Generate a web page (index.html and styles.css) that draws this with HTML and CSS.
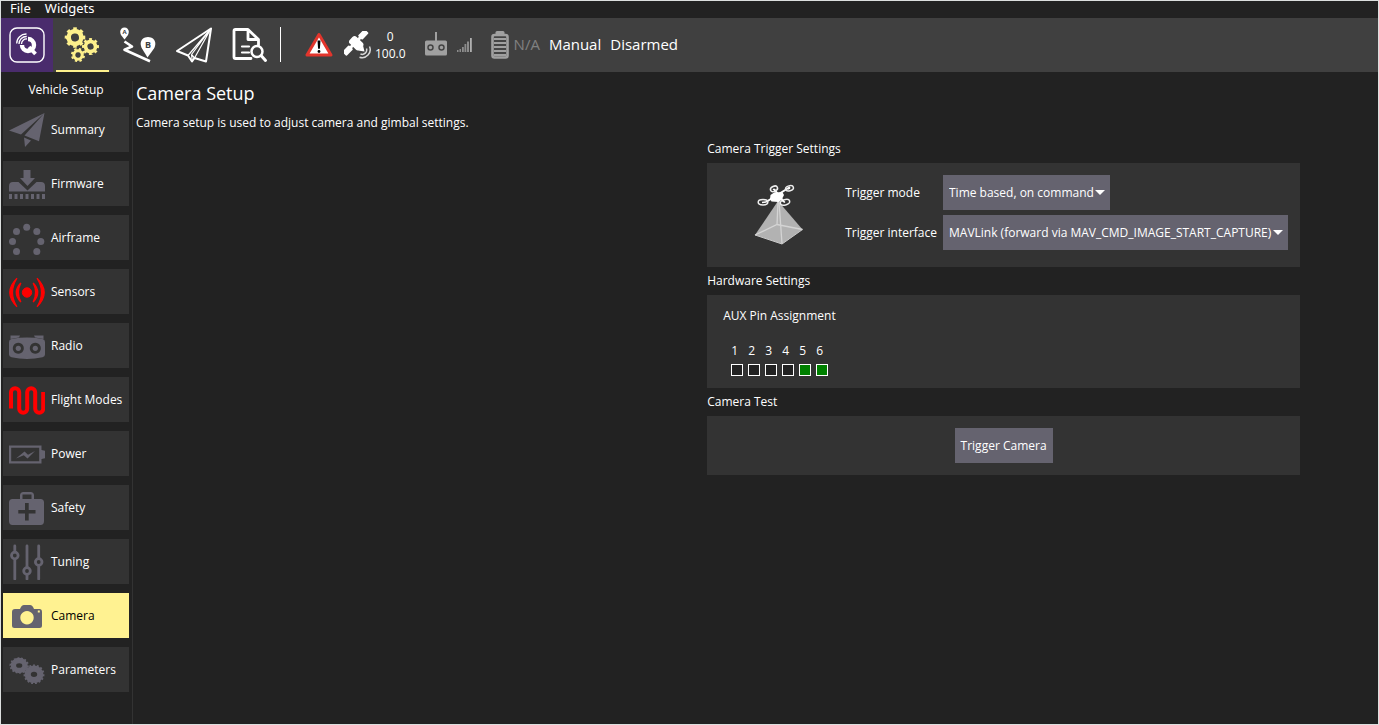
FILE: index.html
```html
<!DOCTYPE html>
<html lang="en">
<head>
<meta charset="utf-8">
<title>Vehicle Setup - Camera</title>
<link rel="stylesheet" href="styles.css">
</head>
<body>
<div class="window">
  <nav class="menubar" aria-label="Main menu">
    <button class="menu" type="button">File</button>
    <button class="menu" type="button">Widgets</button>
  </nav>

  <header class="toolbar">
    <button class="tool tool-home" type="button" aria-label="Settings">
      <svg width="36" height="36" viewBox="0 0 36 36" fill="none" stroke="#fff">
        <rect x="1" y="1" width="34" height="34" rx="7" stroke-width="1.4"/>
        <path d="M13 18A6 6 0 1 0 19 12" stroke-width="4.400"/>
        <path d="M20 20l6.500 7" stroke-width="3.800"/>
        <path d="M7.700 16.500A9.500 9.500 0 0 1 17.500 7M10 17A7.500 7.500 0 0 1 17.800 9.500M12.500 17A5 5 0 0 1 18 12" stroke-width="1.300"/>
      </svg>
    </button>
    <button class="tool tool-active" type="button" aria-label="Vehicle setup">
      <svg width="36" height="36" viewBox="0 0 36 36" fill="none" stroke="#fdf08c">
        <g transform="translate(11 10.500) rotate(-11)"><circle r="6.300" stroke-width="4.600"/><circle r="8.800" stroke-width="3" pathLength="16" stroke-dasharray="1 1"/></g>
        <g transform="translate(26.500 19.500) rotate(-11)"><circle r="5" stroke-width="3.700"/><circle r="7.200" stroke-width="2.600" pathLength="16" stroke-dasharray="1 1"/></g>
        <g transform="translate(14 28) rotate(8)"><circle r="4.200" stroke-width="3"/><circle r="6" stroke-width="2.200" pathLength="16" stroke-dasharray="1 1"/></g>
      </svg>
    </button>
    <button class="tool" type="button" aria-label="Plan">
      <svg width="36" height="36" viewBox="0 0 36 36">
        <path d="M4.500 12.500L1 8C-1 4 1 .4 4.500 .4S10 4 8 8z" fill="#fff"/>
        <path d="M27.500 30.500L22 21.500C18.500 15 22.500 10 28 10S37.500 15 34 21.500z" fill="#fff"/>
        <path d="M4.500 14.500l7.500 5-7.500 3.200L30 34.300" fill="none" stroke="#fff" stroke-width="2.600" stroke-linejoin="round"/>
        <text x="4.500" y="7" class="pin-a">A</text>
        <text x="28" y="21.200" class="pin-b">B</text>
      </svg>
    </button>
    <button class="tool" type="button" aria-label="Fly">
      <svg width="36" height="36" viewBox="0 0 36 36" fill="none" stroke="#fff" stroke-linejoin="round">
        <path d="M35 1.500L1 24l11 4.500 4 6 2.500-3.500 11.500 3.500z" stroke-width="2"/>
        <path d="M35 1.500L12 28.500M35 1.500L15.500 27.500M35 1.500L18.500 31M15.500 27.500l.8 7M15.500 27.500l3 3.500" stroke-width="1.200"/>
      </svg>
    </button>
    <button class="tool" type="button" aria-label="Analyze">
      <svg width="36" height="36" viewBox="0 0 36 36" fill="none" stroke="#fff" stroke-width="2.800" stroke-linecap="round" stroke-linejoin="round">
        <path d="M19 31.500H3.500a1.500 1.500 0 0 1-1.500-1.500V4a1.500 1.500 0 0 1 1.500-1.500H16L26.500 12.500V18M16 3v9.500H26"/>
        <path d="M10 19.500h7M10 25.500h7" stroke-width="2.200"/>
        <circle cx="25" cy="24.500" r="5.500" stroke-width="2.500"/><path d="M29.500 29l4 4.500" stroke-width="3"/>
      </svg>
    </button>
    <span class="divider"></span>
    <button class="messages" type="button" aria-label="Vehicle messages">
      <svg width="30" height="28" viewBox="0 0 30 28">
        <path d="M15 3.500L27 24H3z" fill="#fff" stroke="#e2352c" stroke-width="3" stroke-linejoin="round"/>
        <path d="M13.500 9.500h3l-.6 8.300h-1.800z"/><circle cx="15" cy="20.500" r="1.400"/>
      </svg>
    </button>
    <div class="gps">
      <svg width="28" height="28" viewBox="0 0 28 28" fill="#fff">
        <g transform="translate(11.500 11.500) rotate(-46)">
          <rect x="-16" y="-3" width="9.500" height="6" rx="1"/><rect x="6.500" y="-3" width="9.500" height="6" rx="1"/><rect x="-8" y="-1.500" width="16" height="3"/>
          <rect x="-4.800" y="-6" width="9.600" height="14" rx="3"/>
        </g>
        <path d="M14 19.500l5-5 1.500 6z"/>
        <path d="M22.500 17.500A4.500 4.500 0 0 1 16.500 23M25.500 15.500A8 8 0 0 1 15.500 26.200" fill="none" stroke="#d8d8d8" stroke-width="1.500"/>
      </svg>
      <div class="gps-values"><span>0</span><span>100.0</span></div>
    </div>
    <div class="rc">
      <svg width="22" height="28" viewBox="0 0 22 28" fill="#a0a0a0">
        <rect x="10" y="1" width="2" height="10"/><rect x="0" y="9.500" width="22" height="15" rx="1.500"/>
        <g fill="#a0a0a0" stroke="#444" stroke-width="1.500"><circle cx="5.500" cy="16.500" r="2.500"/><circle cx="16.500" cy="16.500" r="2.500"/></g>
      </svg>
      <svg width="15" height="28" viewBox="0 0 15 28" fill="#8c8c8c">
        <path d="M0 19h1.500v2H0zM2.500 18H4v3H2.500zM5 16h1.800v5H5zM7.500 13h1.800v8H7.500zM10 10.500h2V21h-2z"/><path d="M13 7h1.800v14H13z" fill="#b0b0b0"/>
      </svg>
    </div>
    <div class="battery">
      <svg width="18" height="28" viewBox="0 0 18 28">
        <rect x="4.500" y="0" width="9" height="5" rx="1.500" fill="#a0a0a0"/>
        <rect x="1.500" y="4" width="15" height="22.500" rx="2" fill="#444" stroke="#a0a0a0" stroke-width="2.600"/>
        <path d="M3 8h12M3 12h12M3 16h12M3 20h12M3 24h12" stroke="#a0a0a0" stroke-width="2.200"/>
      </svg>
      <span>N/A</span>
    </div>
    <button class="status" type="button">Manual</button>
    <button class="status" type="button">Disarmed</button>
  </header>

  <div class="body">
    <aside class="sidebar">
      <h2 class="side-title">Vehicle Setup</h2>
      <button class="side" type="button">
        <svg width="36" height="36" viewBox="0 0 36 36"><path d="M35.500 1L0 18.500l12 4zM35.500 1L15.500 23.500l14.500 5.800zM15 25.500l7 3-6 6.500z"/></svg>
        <span>Summary</span></button>
      <button class="side" type="button">
        <svg width="36" height="36" viewBox="0 0 36 36"><path d="M14.500 4h7v8H26l-7.500 8L11 12h3.500zM0 25.500V20q0-4 4-4h5.500l9 8.500 9-8.500H32q4 0 4 4v5.500zM0 28h3v5H0zM5.500 28h3v5h-3zM11 28h3v5h-3zM16.500 28h3v5h-3zM22 28h3v5h-3zM27.500 28h3v5h-3zM33 28h3v5h-3z"/></svg>
        <span>Firmware</span></button>
      <button class="side" type="button">
        <svg width="36" height="36" viewBox="0 0 36 36"><g><circle cx="17.700" cy="7.200" r="3.500"/><circle cx="7.500" cy="11.400" r="3.500"/><circle cx="27.800" cy="11.400" r="3.500"/><circle cx="3.500" cy="21.600" r="3.500"/><circle cx="31.800" cy="21.600" r="3.500"/><circle cx="7.500" cy="31.600" r="3.500"/><circle cx="27.800" cy="31.600" r="3.500"/></g></svg>
        <span>Airframe</span></button>
      <button class="side side-alert" type="button">
        <svg width="36" height="36" viewBox="0 0 36 36"><circle cx="18" cy="18.500" r="4.700"/><path d="M11.800 9q-9 9.500 0 19-5-9.500 0-19zM24.200 9q9 9.500 0 19 5-9.500 0-19z" stroke-width="1.400"/><path d="M8 4.200Q-6.500 18.500 8 32.800-1 18.500 8 4.200zM28 4.200q14.500 14.300 0 28.600 9-14.300 0-28.600z" stroke-width="1.200"/></svg>
        <span>Sensors</span></button>
      <button class="side" type="button">
        <svg width="36" height="36" viewBox="0 0 36 36"><path d="M1.500 7.500h9.500L10 9.500 1.500 11zM25 7.500h9.500V11L26 9.500z"/><path fill-rule="evenodd" d="M0 14q0-2.500 2.500-3 15.500-2.800 31 0 2.500.5 2.500 3v12.500q0 2-2.500 2.800-15.500 3.400-31 0Q0 28.500 0 26.500zM9.300 14.800a5.500 5.500 0 1 0 .01 0zM26.300 14.800a5.500 5.500 0 1 0 .01 0z"/><circle cx="9.300" cy="20.300" r="2.600"/><circle cx="26.300" cy="20.300" r="2.600"/></svg>
        <span>Radio</span></button>
      <button class="side side-alert" type="button">
        <svg width="36" height="36" viewBox="0 0 36 36"><path d="M2 26.500V10.300a4.100 4.100 0 0 1 8.200 0v16.400a4 4 0 0 0 8 0V10.300a4 4 0 0 1 8 0v16.400a4 4 0 0 0 8 0V10" class="wave"/></svg>
        <span>Flight Modes</span></button>
      <button class="side" type="button">
        <svg width="36" height="36" viewBox="0 0 36 36"><path fill-rule="evenodd" d="M0 9.500h32.500v4.500l3.500.8v7.500l-3.500.8v4.400H0zM2.200 11.700v13.600h28V11.700z"/><path d="M7 22.500L15.500 15.500l3.500 3.200 7-3.700-7.500 7.500-3.700-3.300z"/></svg>
        <span>Power</span></button>
      <button class="side" type="button">
        <svg width="36" height="36" viewBox="0 0 36 36"><path fill-rule="evenodd" d="M11 9V5.500Q11 2 14.500 2h7Q25 2 25 5.500V9h6.500q3.500 0 3.500 3.500v18.500q0 4-3.500 4h-28Q0 35 0 31V12.500Q0 9 3.500 9zM13.500 9h9V4.500h-9zM16 13v7H9.300v3.500H16v7h3.700v-7h6.800V20h-6.800v-7z"/></svg>
        <span>Safety</span></button>
      <button class="side" type="button">
        <svg width="36" height="36" viewBox="0 0 36 36"><g class="sliders"><path d="M5.800 2v6M5.800 15.500V35M18 2v21M18 31v4M29.700 2v12M29.700 22v13"/><circle cx="5.800" cy="11.500" r="3.300"/><circle cx="18" cy="27" r="3.300"/><circle cx="29.700" cy="18" r="3.300"/></g></svg>
        <span>Tuning</span></button>
      <button class="side side-current" type="button" aria-current="page">
        <svg width="36" height="36" viewBox="0 0 36 36"><path fill-rule="evenodd" d="M3 14q0-3 3-3h5q1.500-4 4-4h6q2.500 0 4 4h5.500q2.500 0 2.500 3v13.500q0 2.500-2.500 2.500H5.500Q3 30 3 27.500zM18 13a6.700 6.700 0 1 0 .01 0zM28.800 12.500v2h2v-2z"/></svg>
        <span>Camera</span></button>
      <button class="side" type="button">
        <svg width="36" height="36" viewBox="0 0 36 36"><g class="gear"><ellipse cx="10.200" cy="13.500" rx="5.800" ry="5" stroke-width="5.400"/><ellipse cx="10.200" cy="13.500" rx="8.700" ry="7.200" stroke-width="2" pathLength="28" stroke-dasharray="1 1"/><ellipse cx="25" cy="22.300" rx="6.300" ry="5.700" stroke-width="6.200"/><ellipse cx="25" cy="22.300" rx="9.400" ry="8.700" stroke-width="2.200" pathLength="30" stroke-dasharray="1 1"/></g></svg>
        <span>Parameters</span></button>
    </aside>

    <main class="content">
      <h1 class="title">Camera Setup</h1>
      <p class="intro">Camera setup is used to adjust camera and gimbal settings.</p>

      <div class="groups">
        <h2 class="group-title">Camera Trigger Settings</h2>
        <section class="panel panel-trigger">
          <svg class="drone" width="50" height="70" viewBox="0 0 50 70">
            <path d="M24 21L1 55l27 9 20.500-14.500z" fill="#b2b2b2"/>
            <path d="M24 21l-1 24M25 21l3 43M1 55l22-10.500 25.500 5" fill="none" stroke="#d4d4d4" stroke-width="1.300"/>
            <path d="M1 55l27 9 20.500-14.500" fill="none" stroke="#c8c8c8"/>
            <path d="M12 22l24-15M20 9l10 13" stroke="#fff" stroke-width="2"/>
            <path d="M16.500 15l4-2.700h8L30 15l-2.500 5-3 2-7-.5-1.500-2.500z" fill="#fff"/>
            <g fill="none" stroke="#eee" stroke-width="1.500"><ellipse cx="20" cy="8.800" rx="3.700" ry="2.500" transform="rotate(-25 20 8.800)"/><ellipse cx="35.500" cy="8.300" rx="4" ry="2.500" transform="rotate(-15 35.500 8.300)"/><ellipse cx="9" cy="22.300" rx="4.800" ry="2.700"/><ellipse cx="31" cy="22.300" rx="4.800" ry="2.700" transform="rotate(-15 31 22.300)"/></g>
            <path d="M8 22.500l4-.5M19 9l2 1.500M34 9l2-1M28 20l3 2.500" stroke="#fff" stroke-width="1.500"/>
          </svg>
          <div class="fields">
            <label for="trigger-mode">Trigger mode</label>
            <span class="select-box"><select id="trigger-mode"><option>Time based, on command</option></select></span>
            <label for="trigger-interface">Trigger interface</label>
            <span class="select-box"><select id="trigger-interface"><option>MAVLink (forward via MAV_CMD_IMAGE_START_CAPTURE)</option></select></span>
          </div>
        </section>

        <h2 class="group-title">Hardware Settings</h2>
        <section class="panel panel-pins">
          <h3 class="pins-title">AUX Pin Assignment</h3>
          <div class="pins">
            <label class="pin">1<input type="checkbox"></label>
            <label class="pin">2<input type="checkbox"></label>
            <label class="pin">3<input type="checkbox"></label>
            <label class="pin">4<input type="checkbox"></label>
            <label class="pin">5<input type="checkbox" checked></label>
            <label class="pin">6<input type="checkbox" checked></label>
          </div>
        </section>

        <h2 class="group-title">Camera Test</h2>
        <section class="panel panel-test">
          <button class="action" type="button">Trigger Camera</button>
        </section>
      </div>
    </main>
  </div>
</div>
</body>
</html>
```

FILE: styles.css
```css
* {
  box-sizing: border-box;
}

body {
  margin: 0;
  background: #222;
  color: #fff;
  font: 12px/17px "Open Sans", sans-serif;
}

button,
select {
  margin: 0;
  padding: 0;
  border: 0;
  border-radius: 0;
  background: none;
  color: inherit;
  font: inherit;
}

h1, h2, h3, p {
  margin: 0;
  font-size: 12px;
  font-weight: 400;
}

svg {
  display: block;
  flex: none;
}

.window {
  display: flex;
  flex-direction: column;
  min-height: 100vh;
  border: 1px solid #dcdfde;
}

.menubar {
  display: flex;
  align-items: flex-start;
  gap: 14px;
  height: 17px;
  padding-left: 9px;
}

.menu {
  font: 13px/14px "Noto Sans", sans-serif;
}

/* Toolbar */
.toolbar {
  display: flex;
  align-items: center;
  height: 54px;
  padding-bottom: 1px;
  background: #404040;
}

.tool {
  display: flex;
  align-items: center;
  align-self: flex-start;
  justify-content: center;
  width: 53px;
  height: 54px;
  margin-right: 3px;
  padding: 0 1px 1px 0;
}

.tool-home {
  width: 52px;
  background: #4a2c6d;
}

.tool-active {
  border-bottom: 2px solid #fdf08c;
  padding-top: 1px;
  padding-bottom: 0;
}

.pin-a,
.pin-b {
  fill: #404040;
  font-family: "Open Sans", sans-serif;
  font-weight: 700;
  text-anchor: middle;
}

.pin-a {
  font-size: 6px;
}

.pin-b {
  font-size: 9px;
}

.divider {
  width: 1px;
  height: 35px;
  background: #fff;
}

.messages {
  margin-left: 23px;
}

.gps {
  display: flex;
  align-items: center;
  gap: 3px;
  margin-left: 10px;
}

.gps-values {
  display: flex;
  flex-direction: column;
  align-items: center;
}

.rc {
  display: flex;
  gap: 10px;
  margin-left: 19px;
}

.battery {
  display: flex;
  align-items: center;
  gap: 5px;
  margin-left: 19px;
  color: #808080;
  font-size: 15px;
}

.status {
  margin-left: 9px;
  font-size: 15px;
}

/* Page body */
.body {
  display: flex;
  flex: 1;
  padding-top: 9px;
}

.sidebar {
  display: flex;
  flex-direction: column;
  gap: 9px;
  width: 132px;
  padding: 0 3px 9px 2px;
  border-right: 1px solid #333;
}

.side-title {
  text-align: center;
}

.side {
  display: flex;
  align-items: center;
  gap: 6px;
  height: 45px;
  padding-left: 6px;
  background: #333;
  white-space: nowrap;
}

.side svg {
  fill: #65636f;
  stroke: none;
}

.side-alert svg {
  fill: #f00;
  stroke: #f00;
}

.side-alert .wave {
  fill: none;
  stroke-width: 4;
}

.side .sliders,
.side .gear {
  fill: none;
  stroke: #65636f;
}

.sliders {
  stroke-width: 2.8;
  stroke-linecap: round;
}

.side-current {
  background: #fff291;
  color: #000;
}

.content {
  flex: 1;
  padding: 0 78px 24px 3px;
}

.title {
  font-size: 18px;
  line-height: 24px;
}

.intro {
  padding: 9px 0 4px;
}

.groups {
  width: fit-content;
  margin-left: auto;
}

.group-title {
  line-height: 28px;
}

.panel {
  display: flex;
  padding: 12px;
  background: #333;
}

.panel-trigger {
  align-items: flex-end;
  gap: 41px;
  padding: 12px 12px 17px 47px;
}

.fields {
  display: grid;
  grid-template-columns: auto auto;
  align-items: center;
  gap: 5px 6px;
}

.select-box {
  position: relative;
  justify-self: start;
}

.select-box::after {
  content: "";
  position: absolute;
  top: 15px;
  right: 5px;
  border: solid transparent;
  border-width: 5px 5px 0;
  border-top-color: #fff;
  pointer-events: none;
}

select {
  display: block;
  height: 35px;
  padding: 0 16px 0 6px;
  appearance: none;
  background: #65636f;
}

.panel-pins {
  flex-direction: column;
  gap: 18px;
  padding-left: 16px;
}

.pins {
  display: flex;
  gap: 5px;
  padding-left: 8px;
}

.pin {
  display: flex;
  flex-direction: column;
  gap: 5px;
  width: 12px;
}

.pin input {
  width: 12px;
  height: 12px;
  margin: 0;
  border: 1px solid #fff;
  appearance: none;
  background: #222;
}

.pin input:checked {
  background: #008000;
}

.panel-test {
  justify-content: center;
}

.action {
  height: 35px;
  padding: 0 6px;
  background: #65636f;
}
```
